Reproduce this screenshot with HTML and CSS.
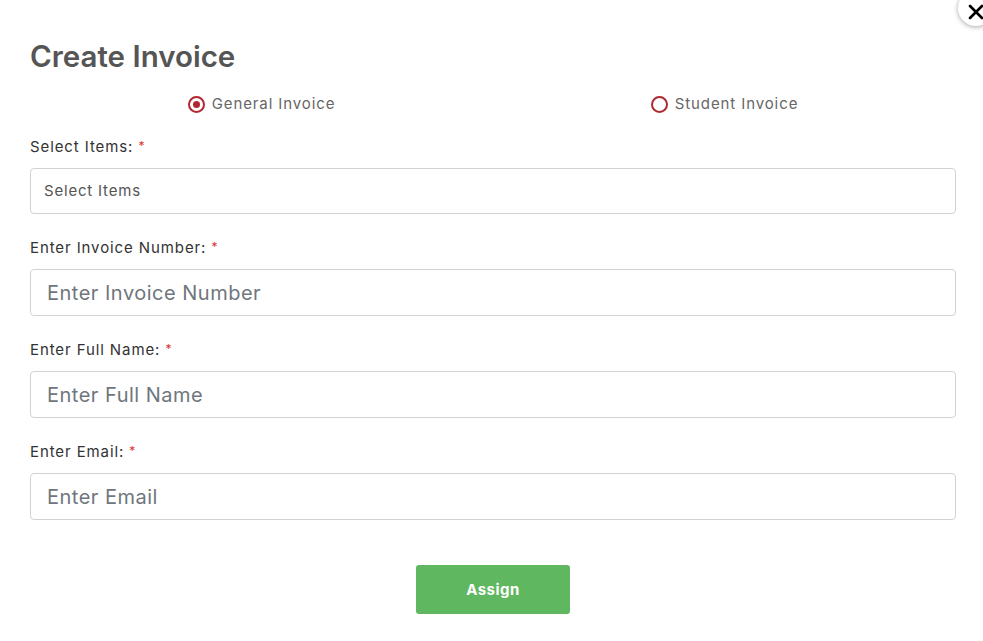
FILE: index.html
```html
<!DOCTYPE html>
<html>
<head>
<meta charset="utf-8">
<link rel="stylesheet" href="styles.css">
</head>
<body>
<div class="modal">
  <button class="close" aria-label="Close">
    <svg width="16" height="16" viewBox="0 0 16 16"><path d="M2 2 L14 14 M14 2 L2 14" stroke="#000" stroke-width="2.6" stroke-linecap="round"/></svg>
  </button>
  <h1 class="title">Create Invoice</h1>
  <div class="radios">
    <label class="radio"><span class="dot checked"></span>General Invoice</label>
    <label class="radio"><span class="dot"></span>Student Invoice</label>
  </div>
  <div class="group">
    <div class="label">Select Items: <span class="req">*</span></div>
    <div class="field select">Select Items</div>
  </div>
  <div class="group">
    <div class="label">Enter Invoice Number: <span class="req">*</span></div>
    <input class="field input" placeholder="Enter Invoice Number">
  </div>
  <div class="group">
    <div class="label">Enter Full Name: <span class="req">*</span></div>
    <input class="field input" placeholder="Enter Full Name">
  </div>
  <div class="group">
    <div class="label">Enter Email: <span class="req">*</span></div>
    <input class="field input" placeholder="Enter Email">
  </div>
  <div class="actions">
    <button class="assign">Assign</button>
  </div>
</div>
</body>
</html>
```
FILE: styles.css
```css
* { box-sizing: border-box; }
html, body { margin: 0; background: #fff; }
body { font-family: "Inter", "Noto Sans", sans-serif; color: #333; }
.modal { position: relative; width: 983px; height: 641px; padding: 39px 27px 0 30px; overflow: hidden; }
.close {
  position: absolute; left: 958px; top: -10px; width: 36px; height: 36px;
  border-radius: 50%; background: #fff; border: none; padding: 0;
  box-shadow: 0 1px 5px rgba(0,0,0,0.35);
  display: flex; align-items: center; justify-content: center;
}
.close svg { margin-top: 8px; margin-right: 1px; }
.title { margin: 0; font-size: 29.5px; line-height: 34px; font-weight: 600; color: #555; letter-spacing: 0; }
.radios { display: grid; grid-template-columns: 1fr 1fr; margin-top: 21px; height: 20px; }
.radio { display: flex; align-items: center; justify-content: center; gap: 7px; font-size: 15px; line-height: 20px; color: #666; letter-spacing: 0.9px; }
.dot { width: 17px; height: 17px; border-radius: 50%; border: 2px solid #b0282f; display: inline-flex; align-items: center; justify-content: center; }
.dot.checked::after { content: ""; width: 7px; height: 7px; border-radius: 50%; background: #b0282f; }
.group { margin-top: 22px; }
.group + .group { margin-top: 23px; }
.label { font-size: 15px; line-height: 20px; height: 21px; padding-top: 1px; color: #333; letter-spacing: 0.9px; }
.req { color: #e03030; font-size: 12px; line-height: 0; vertical-align: 2px; letter-spacing: 0; }
.field {
  display: block; width: 926px; margin-top: 11px; border: 1px solid #cfd2d6; border-radius: 4px;
  background: #fff; font-family: inherit;
}
.select { height: 46px; padding: 0 13px; font-size: 15px; line-height: 44px; color: #555; letter-spacing: 0.8px; }
.input { height: 47px; padding: 0 16px; font-size: 20px; color: #555; outline: none; letter-spacing: 0.5px; }
.input::placeholder { color: #6f767d; }
.actions { display: flex; justify-content: center; margin-top: 45px; width: 926px; }
.assign {
  width: 154px; height: 49px; background: #5fb760; color: #fff; border: none; border-radius: 3px;
  font-family: inherit; font-size: 15px; font-weight: 700; letter-spacing: 0.5px;
}
```
